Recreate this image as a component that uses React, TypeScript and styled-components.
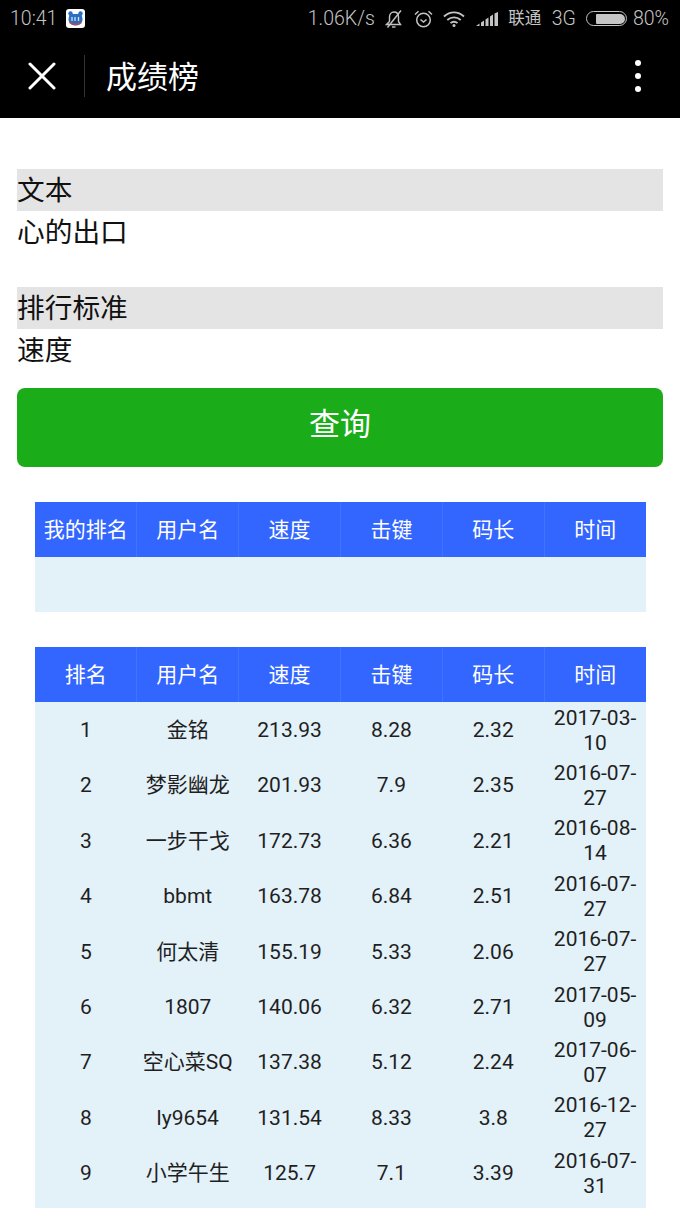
import * as React from 'react';
import styled, { createGlobalStyle } from 'styled-components';

const GlobalStyle = createGlobalStyle`
  html, body {
    margin: 0;
    padding: 0;
    background: #fff;
    overflow: hidden;
  }
  body {
    font-family: Roboto, "Noto Sans CJK SC", sans-serif;
    color: #1a1a1a;
  }
`;

const myHeads = ['我的排名', '用户名', '速度', '击键', '码长', '时间'];
const heads = ['排名', '用户名', '速度', '击键', '码长', '时间'];

const rows = [
  ['1', '金铭', '213.93', '8.28', '2.32', '2017-03-10'],
  ['2', '梦影幽龙', '201.93', '7.9', '2.35', '2016-07-27'],
  ['3', '一步干戈', '172.73', '6.36', '2.21', '2016-08-14'],
  ['4', 'bbmt', '163.78', '6.84', '2.51', '2016-07-27'],
  ['5', '何太清', '155.19', '5.33', '2.06', '2016-07-27'],
  ['6', '1807', '140.06', '6.32', '2.71', '2017-05-09'],
  ['7', '空心菜SQ', '137.38', '5.12', '2.24', '2017-06-07'],
  ['8', 'ly9654', '131.54', '8.33', '3.8', '2016-12-27'],
  ['9', '小学午生', '125.7', '7.1', '3.39', '2016-07-31'],
];

const App: React.FC = () => (
  <Page>
    <GlobalStyle />
    <StatusBar>
      <StatusLeft>
        <span>10:41</span>
        <AppBadge>
          <svg width="19" height="19" viewBox="0 0 19 19">
            <rect width="19" height="19" rx="3" fill="#fff" />
            <circle cx="4.500" cy="4.500" r="2.200" fill="#2a6fc0" />
            <circle cx="14.500" cy="4.500" r="2.200" fill="#2a6fc0" />
            <path d="M3.500 5h12l1 5c0 4-3 6.500-7 6.500s-7-2.500-7-6.500z" fill="#2a6fc0" />
            <path d="M6 8v4M9 8v4M12.500 8v4" stroke="#cfe2f5" strokeWidth="1.300" />
            <path d="M3.500 13.500c3 2.500 9 2.500 12 0" stroke="#d9403a" strokeWidth="1.300" fill="none" />
          </svg>
        </AppBadge>
      </StatusLeft>
      <StatusRight>
        <span>1.06K/s</span>
        <svg width="18" height="18" viewBox="0 0 18 18" fill="none" stroke="#c4c4c4" strokeWidth="1.400">
          <path d="M1.500 14.500h14l-2-3V7c0-3-1.800-5-4.500-5S4.500 4 4.500 7v4.500z" />
          <path d="M7 17h3.500" />
          <path d="M16 .5 2.500 17.500" />
        </svg>
        <svg width="19" height="18" viewBox="0 0 19 18" fill="none" stroke="#c4c4c4" strokeWidth="1.500">
          <circle cx="9.500" cy="10" r="6.800" />
          <path d="M6.500 9.500l3 2.500 3-2.500M1 4.500 4.500 1.300M18 4.500 14.500 1.300" />
        </svg>
        <svg width="22" height="16" viewBox="0 0 22 16" fill="none" stroke="#c4c4c4" strokeWidth="1.900">
          <path d="M1 5.500c6-5.500 14-5.500 20 0M4.300 9c4-3.500 9.400-3.500 13.400 0M7.500 12c2-1.500 5-1.500 7 0" />
          <circle cx="11" cy="14.500" r="1.500" fill="#c4c4c4" stroke="none" />
        </svg>
        <svg width="22" height="14" viewBox="0 0 22 14" fill="#c4c4c4">
          <path d="M0 14 3.500 11.500V14z" />
          <path d="M5 10.500 8 8.500V14H5z" />
          <path d="M9.500 7.500 12.500 5.500V14h-3z" />
          <path d="M14 4.500 17 2.500V14h-3z" />
          <path d="M18.500 1.500 22 0V14h-3.500z" />
        </svg>
        <SmallLabel>联通</SmallLabel>
        <span>3G</span>
        <Battery>
          <BatteryFill />
        </Battery>
        <Percent>80%</Percent>
      </StatusRight>
    </StatusBar>

    <TitleBar>
      <CloseButton>
        <svg width="28" height="28" viewBox="0 0 28 28" stroke="#fff" strokeWidth="3" strokeLinecap="round">
          <path d="M2 2l24 24M26 2 2 26" />
        </svg>
      </CloseButton>
      <Divider />
      <Title>成绩榜</Title>
      <Dots>
        <i />
        <i />
        <i />
      </Dots>
    </TitleBar>

    <Content>
      <Field>
        <FieldLabel>文本</FieldLabel>
        <FieldValue>心的出口</FieldValue>
      </Field>
      <Field>
        <FieldLabel>排行标准</FieldLabel>
        <FieldValue>速度</FieldValue>
      </Field>
      <QueryButton>查询</QueryButton>

      <Table>
        <thead>
          <tr>
            {myHeads.map(h => (
              <HeadCell key={h}>{h}</HeadCell>
            ))}
          </tr>
        </thead>
        <tbody>
          <tr>
            {myHeads.map(h => (
              <Cell key={h} />
            ))}
          </tr>
        </tbody>
      </Table>

      <Table>
        <thead>
          <tr>
            {heads.map(h => (
              <HeadCell key={h}>{h}</HeadCell>
            ))}
          </tr>
        </thead>
        <tbody>
          {rows.map(row => (
            <tr key={row[0]}>
              {row.map((value, i) => (
                <Cell key={i}>{value}</Cell>
              ))}
            </tr>
          ))}
          <tr>
            {heads.map(h => (
              <Cell key={h} />
            ))}
          </tr>
        </tbody>
      </Table>
    </Content>
  </Page>
);

export default App;

const Page = styled.div`
  width: 680px;
  height: 1208px;
  overflow: hidden;
  background: #fff;
`;

const StatusBar = styled.div`
  height: 37px;
  background: #000;
  color: #c4c4c4;
  font-size: 19.5px;
  font-weight: 300;
  display: flex;
  align-items: center;
  justify-content: space-between;
  padding: 0 11px 0 10px;
`;

const StatusLeft = styled.div`
  display: flex;
  align-items: center;
  gap: 9px;
`;

const AppBadge = styled.div`
  display: flex;
`;

const StatusRight = styled.div`
  display: flex;
  align-items: center;
  gap: 10.5px;
`;

const SmallLabel = styled.span`
  margin-bottom: 3px;
  font-size: 16.5px;
  font-weight: 400;
`;

const Percent = styled.span`
  margin-left: -5px;
`;

const Battery = styled.div`
  width: 41px;
  height: 15px;
  box-sizing: border-box;
  border: 1.5px solid #c4c4c4;
  border-radius: 8px;
  padding: 1.5px;
  display: flex;
  justify-content: flex-end;
`;

const BatteryFill = styled.div`
  width: 80%;
  background: #c4c4c4;
  border-radius: 1px 5px 5px 1px;
`;

const TitleBar = styled.div`
  height: 81px;
  background: #000;
  display: flex;
  align-items: center;
  padding-bottom: 4px;
  box-sizing: border-box;
`;

const CloseButton = styled.div`
  width: 84px;
  display: flex;
  justify-content: center;
`;

const Divider = styled.div`
  width: 1px;
  height: 42px;
  background: #333;
`;

const Title = styled.div`
  flex: 1;
  margin-left: 21px;
  padding-bottom: 2px;
  color: #fff;
  font-size: 31px;
`;

const Dots = styled.div`
  width: 84px;
  display: flex;
  flex-direction: column;
  align-items: center;
  gap: 7px;

  i {
    width: 6px;
    height: 6px;
    border-radius: 50%;
    background: #fff;
  }
`;

const Content = styled.div`
  padding: 51px 17px 0;
`;

const Field = styled.div`
  margin-bottom: 34px;
`;

const FieldLabel = styled.div`
  height: 42px;
  line-height: 44px;
  background: #e4e4e4;
  font-size: 27.700px;
  color: #111;
`;

const FieldValue = styled.div`
  height: 42px;
  line-height: 44px;
  font-size: 27.700px;
  color: #111;
`;

const QueryButton = styled.button`
  display: block;
  width: 100%;
  height: 79px;
  margin: -17px 0 35px;
  padding: 0 0 12px;
  border: 0;
  border-radius: 8px;
  background: #1aad19;
  color: #fff;
  font-family: inherit;
  font-size: 31px;
`;

const Table = styled.table`
  width: 611px;
  margin: 0 0 35px 18px;
  border-collapse: collapse;
  table-layout: fixed;
`;

const HeadCell = styled.th`
  box-sizing: border-box;
  height: 55px;
  padding: 0 0 3px;
  background: #3366ff;
  color: #fff;
  font-size: 21px;
  font-weight: 400;
  border-left: 1px solid #4273ff;

  &:first-child {
    border-left: 0;
  }
`;

const Cell = styled.td`
  box-sizing: border-box;
  height: 55.400px;
  padding: 1px 4px 0;
  background: #e3f1f9;
  color: #1f1f1f;
  font-size: 21px;
  line-height: 25px;
  text-align: center;
`;
